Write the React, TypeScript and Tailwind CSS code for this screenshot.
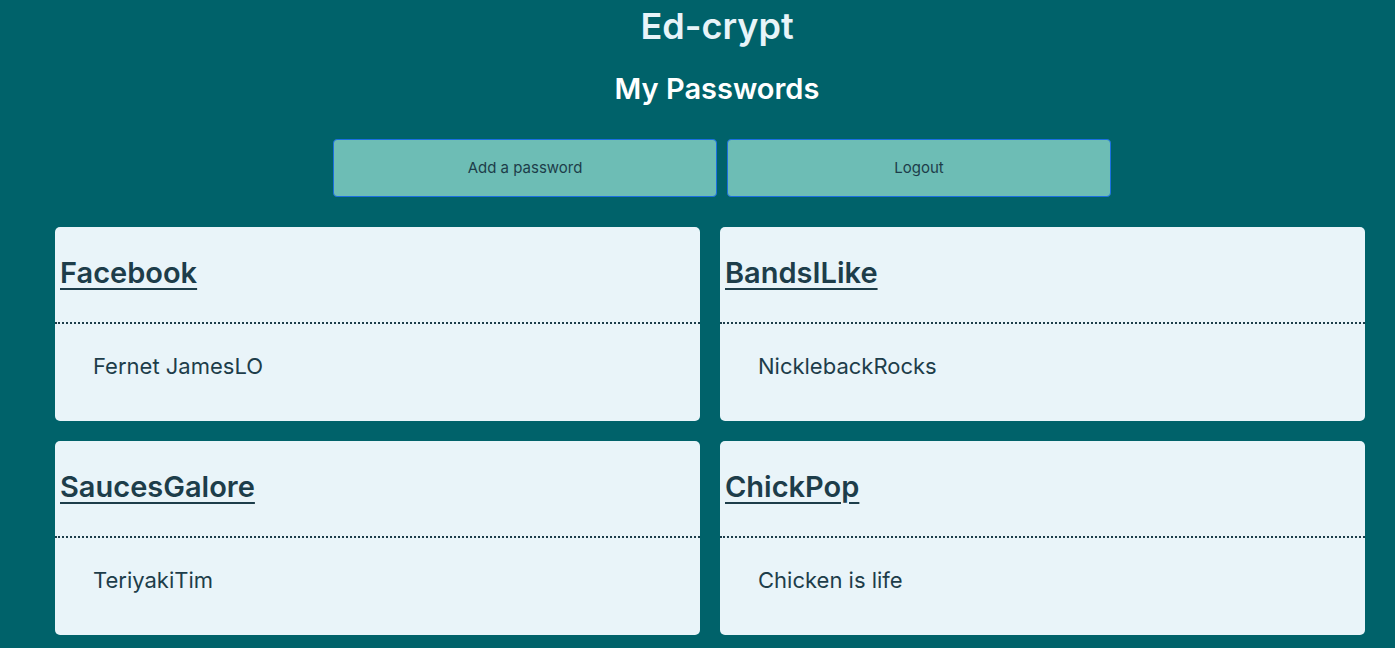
import React from "react";

const passwords = [
  { site: "Facebook", value: "Fernet JamesLO" },
  { site: "BandsILike", value: "NicklebackRocks" },
  { site: "SaucesGalore", value: "TeriyakiTim" },
  { site: "ChickPop", value: "Chicken is life" },
];

const App = () => {
  return (
    <div
      className="min-h-[648px] bg-[#00626a] pb-10"
      style={{ fontFamily: "Inter, 'Noto Sans', sans-serif" }}
    >
      <header className="flex flex-col items-center pl-[39px]">
        <h1 className="pt-[4px] text-[36px] leading-[44px] font-semibold text-[#e8f4f9]">
          Ed-crypt
        </h1>
        <h2 className="mt-[23px] text-[29px] leading-[36px] font-semibold text-white">
          My Passwords
        </h2>
      </header>

      <div className="mt-[32px] flex justify-center gap-[10px] pl-[49px]">
        <button className="h-[58px] w-[384px] rounded-[4px] border border-[#1a6fe0] bg-[#6dbdb5] text-[15px] text-[#1d3d4a]">
          Add a password
        </button>
        <button className="h-[58px] w-[384px] rounded-[4px] border border-[#1a6fe0] bg-[#6dbdb5] text-[15px] text-[#1d3d4a]">
          Logout
        </button>
      </div>

      <div className="mt-[30px] ml-[55px] mr-[30px] grid grid-cols-2 gap-[20px]">
        {passwords.map((p) => (
          <div
            key={p.site}
            className="h-[194px] rounded-[5px] bg-[#e9f4f9] text-[#1d3d4a]"
          >
            <div className="flex h-[97px] items-center border-b-2 border-dotted border-[#1d3d4a] px-[5px] pb-[4px]">
              <a
                href="#"
                className="text-[29px] font-semibold underline decoration-2 underline-offset-[5px]"
              >
                {p.site}
              </a>
            </div>
            <p className="pt-[27px] pl-[38px] text-[22px] leading-[30px]">
              {p.value}
            </p>
          </div>
        ))}
      </div>
    </div>
  );
};

export default App;
